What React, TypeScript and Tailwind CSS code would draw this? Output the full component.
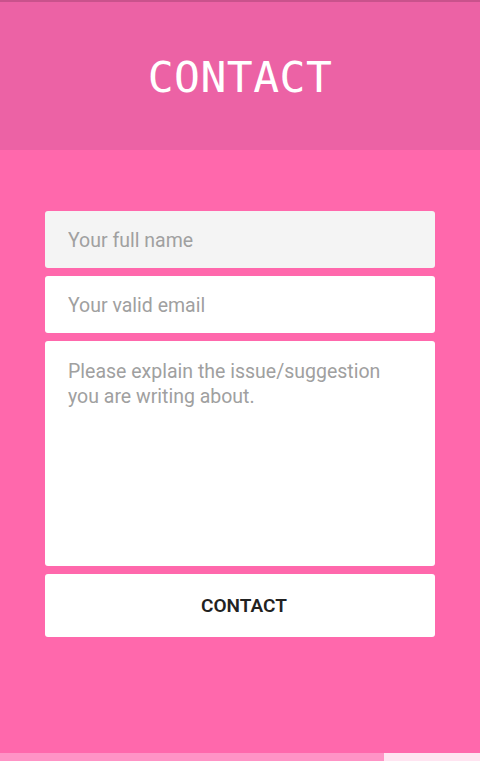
import { useState } from 'react';

export default function App() {
  const [name, setName] = useState('');
  const [email, setEmail] = useState('');
  const [message, setMessage] = useState('');

  return (
    <div className="flex h-[761px] w-[480px] flex-col overflow-hidden bg-[#ff68ac] font-['Roboto',sans-serif]">
      {/* header */}
      <div className="h-[2px] bg-[#c9528c]" />
      <div className="flex h-[148px] items-center justify-center bg-[#ec62a5]">
        <h1 className="mt-[3px] font-['DejaVu_Sans_Mono',monospace] text-[43px] leading-none tracking-[0.5px] text-white">
          CONTACT
        </h1>
      </div>

      <form
        className="flex flex-1 flex-col gap-2 px-[45px] pt-[61px]"
        onSubmit={(e) => e.preventDefault()}
      >
        <input
          value={name}
          onChange={(e) => setName(e.target.value)}
          placeholder="Your full name"
          className="h-[57px] rounded-[3px] bg-[#f4f4f4] px-[23px] pt-[2px] text-[19.5px] text-[#333] outline-none placeholder:text-[#a0a0a0]"
        />
        <input
          value={email}
          onChange={(e) => setEmail(e.target.value)}
          placeholder="Your valid email"
          className="h-[57px] rounded-[3px] bg-white px-[23px] pt-[2px] text-[19.5px] text-[#333] outline-none placeholder:text-[#a0a0a0]"
        />
        <textarea
          value={message}
          onChange={(e) => setMessage(e.target.value)}
          placeholder="Please explain the issue/suggestion you are writing about."
          className="h-[225px] resize-none rounded-[3px] bg-white px-[23px] pt-[18px] text-[19.5px] leading-[25px] text-[#333] outline-none placeholder:text-[#a0a0a0]"
        />
        <button
          type="submit"
          className="h-[63px] rounded-[3px] bg-white pl-[8px] pt-[2px] text-[19px] font-semibold text-[#222]"
        >
          CONTACT
        </button>
      </form>

      {/* bottom page indicator */}
      <div className="flex h-[8px]">
        <div className="w-[384px] bg-[#ff94c6]" />
        <div className="flex-1 bg-[#ffe4f1]" />
      </div>
    </div>
  );
}
